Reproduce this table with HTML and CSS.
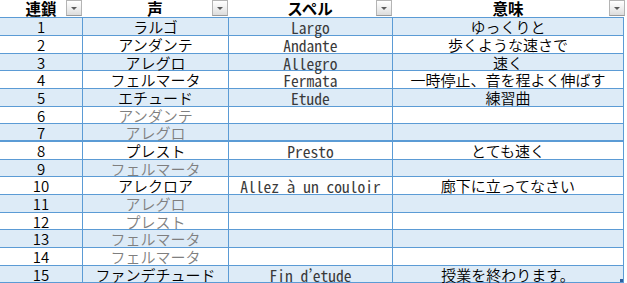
FILE: index.html
```html
<!DOCTYPE html>
<html lang="ja">
<head>
<meta charset="utf-8">
<title>連鎖</title>
<link rel="stylesheet" href="styles.css">
</head>
<body>
<div class="sheet">
  <div class="row head">
    <div class="cell"><span>連鎖</span><i class="drop"></i></div>
    <div class="cell"><span>声</span><i class="drop"></i></div>
    <div class="cell"><span>スペル</span><i class="drop"></i></div>
    <div class="cell"><span>意味</span><i class="drop"></i></div>
  </div>
  <div class="row band"><div class="cell">1</div><div class="cell">ラルゴ</div><div class="cell lat">Largo</div><div class="cell">ゆっくりと</div></div>
  <div class="row"><div class="cell">2</div><div class="cell">アンダンテ</div><div class="cell lat">Andante</div><div class="cell">歩くような速さで</div></div>
  <div class="row band"><div class="cell">3</div><div class="cell">アレグロ</div><div class="cell lat">Allegro</div><div class="cell">速く</div></div>
  <div class="row"><div class="cell">4</div><div class="cell">フェルマータ</div><div class="cell lat">Fermata</div><div class="cell">一時停止、音を程よく伸ばす</div></div>
  <div class="row band"><div class="cell">5</div><div class="cell">エチュード</div><div class="cell lat">Etude</div><div class="cell">練習曲</div></div>
  <div class="row"><div class="cell">6</div><div class="cell dim">アンダンテ</div><div class="cell lat"></div><div class="cell"></div></div>
  <div class="row band thick"><div class="cell">7</div><div class="cell dim">アレグロ</div><div class="cell lat"></div><div class="cell"></div></div>
  <div class="row"><div class="cell">8</div><div class="cell">プレスト</div><div class="cell lat">Presto</div><div class="cell">とても速く</div></div>
  <div class="row band"><div class="cell">9</div><div class="cell dim">フェルマータ</div><div class="cell lat"></div><div class="cell"></div></div>
  <div class="row"><div class="cell">10</div><div class="cell">アレクロア</div><div class="cell lat">Allez à un couloir</div><div class="cell">廊下に立ってなさい</div></div>
  <div class="row band"><div class="cell">11</div><div class="cell dim">アレグロ</div><div class="cell lat"></div><div class="cell"></div></div>
  <div class="row"><div class="cell">12</div><div class="cell dim">プレスト</div><div class="cell lat"></div><div class="cell"></div></div>
  <div class="row band"><div class="cell">13</div><div class="cell dim">フェルマータ</div><div class="cell lat"></div><div class="cell"></div></div>
  <div class="row"><div class="cell">14</div><div class="cell dim">フェルマータ</div><div class="cell lat"></div><div class="cell"></div></div>
  <div class="row band"><div class="cell">15</div><div class="cell">ファンデチュード</div><div class="cell lat">Fin d’etude</div><div class="cell">授業を終わります。</div></div>
  <i class="grip"></i>
</div>
</body>
</html>
```

FILE: styles.css
```css
html, body {
  margin: 0;
  padding: 0;
  background: #ffffff;
}

.sheet {
  position: relative;
  width: 624px;
  font-family: "Noto Sans CJK JP", "Noto Sans", sans-serif;
  font-size: 15px;
  font-weight: 350;
  color: #000000;
}

.row {
  display: grid;
  grid-template-columns: 82px 146px 164px 232px;
  height: 18px;
  box-sizing: border-box;
  border-bottom: 1px solid #5b9bd5;
  background: #ffffff;
}

.row:nth-child(3n+1) {
  height: 17px;
}

.row.band {
  background: #ddebf7;
}

.row.thick {
  border-bottom-width: 2px;
}

.row.head {
  height: 18px;
}

.cell {
  box-sizing: border-box;
  text-align: center;
  line-height: 17px;
  white-space: nowrap;
}

.row .cell + .cell {
  border-left: 1px solid #5b9bd5;
}

.row .cell:last-child {
  border-right: 1px solid #5b9bd5;
}

.row.head .cell {
  position: relative;
  border-left: 0;
  border-right: 0;
  font-weight: bold;
  font-size: 15.5px;
  line-height: 17px;
}

.row.head .cell + .cell {
  border-left: 0;
}

.lat {
  font-family: "Noto Sans Mono CJK JP", "Liberation Mono", monospace;
  font-size: 15.5px;
  font-weight: 300;
  line-height: 18px;
  color: #3a3a3a;
}

.dim {
  color: #7f7f7f;
}

.drop {
  position: absolute;
  top: 0;
  right: 0;
  width: 16px;
  height: 16px;
  box-sizing: border-box;
  border: 1px solid #b4b4b4;
  border-bottom-color: #9a9a9a;
  background: linear-gradient(#ffffff, #ececec 60%, #dcdcdc);
}

.row.head .cell:last-child .drop {
  right: -1px;
}

.drop::after {
  content: "";
  position: absolute;
  left: 4px;
  top: 6px;
  border-left: 3px solid transparent;
  border-right: 3px solid transparent;
  border-top: 3px solid #5a5a5a;
}

.grip {
  position: absolute;
  right: 1px;
  bottom: 1px;
  width: 3px;
  height: 3px;
  background: #2f5f9e;
}
```
